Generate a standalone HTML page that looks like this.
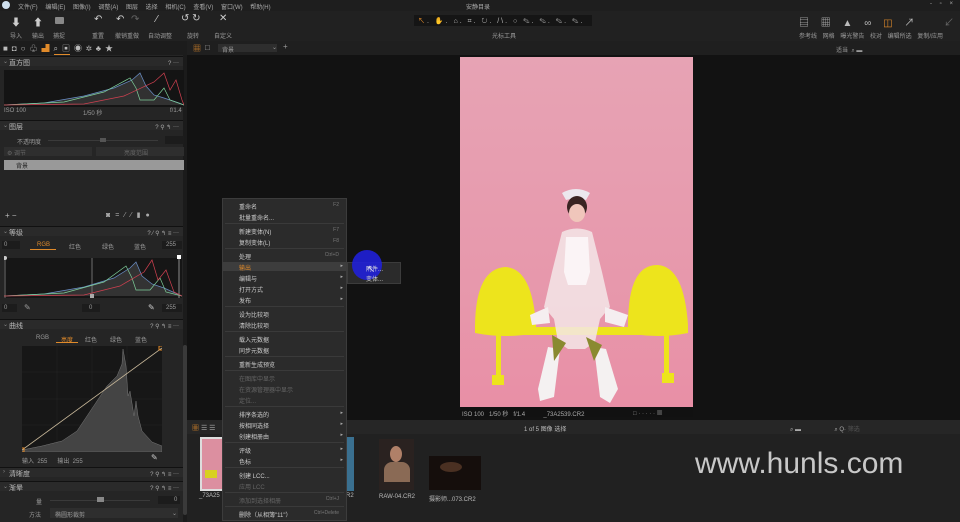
<!DOCTYPE html><html><head><meta charset="utf-8"><style>
*{margin:0;padding:0;box-sizing:border-box}
body{width:960px;height:522px;overflow:hidden;background:#1a1a1a;font-family:"Liberation Sans","Noto Sans CJK SC",sans-serif;color:#aaa;font-size:6px;position:relative}
.a{position:absolute}
.t{position:absolute;white-space:nowrap;font-size:6px;color:#9a9a9a}
.hd{position:absolute;left:0;width:183px;height:10px;background:#2a2a2a;border-top:1px solid #111}
.hd span{position:absolute;left:9px;top:1px;font-size:7px;color:#bbb}
.hd i{position:absolute;left:3px;top:1px;font-style:normal;font-size:6px;color:#888}
.hd b{position:absolute;right:4px;top:1px;font-weight:normal;font-size:6px;color:#aaa}
.mi{position:absolute;left:17px;font-size:6px;color:#ccc}
.mk{position:absolute;right:8px;font-size:5px;color:#777}
.ar{position:absolute;right:4px;font-size:5px;color:#aaa}
.sep{position:absolute;left:3px;right:3px;height:1px;background:#3a3a3a}
.dis{color:#666!important}
</style></head><body>
<div class="a" style="left:0;top:0;width:960px;height:11px;background:#1e1e1e"></div>
<div class="a" style="left:2px;top:1px;width:8px;height:8px;border-radius:50%;background:#cfe0ee"></div>
<div class="t" style="left:18px;top:2px;color:#aaa;word-spacing:6px">文件(F) 编辑(E) 图像(I) 调整(A) 图层 选择 相机(C) 查看(V) 窗口(W) 帮助(H)</div>
<div class="t" style="left:466px;top:2px;color:#aaa">安静目录</div>
<div class="t" style="left:930px;top:1px;color:#aaa;word-spacing:6px">- ▫ ×</div>
<div class="a" style="left:0;top:11px;width:960px;height:30px;background:#212121"></div>
<div class="t" style="left:11px;top:14px;font-size:10px;color:#ccc">⬇</div><div class="t" style="left:10px;top:31px">导入</div>
<div class="t" style="left:33px;top:14px;font-size:10px;color:#ccc">⬆</div><div class="t" style="left:32px;top:31px">输出</div>
<div class="a" style="left:55px;top:17px;width:9px;height:7px;background:#888;border-radius:1px"></div><div class="t" style="left:53px;top:31px">捕捉</div>
<div class="t" style="left:94px;top:14px;font-size:10px;color:#ccc">↶</div><div class="t" style="left:92px;top:31px">重置</div>
<div class="t" style="left:116px;top:14px;font-size:10px;color:#ccc">↶</div><div class="t" style="left:131px;top:14px;font-size:10px;color:#666">↷</div><div class="t" style="left:115px;top:31px">撤销重做</div>
<div class="t" style="left:156px;top:14px;font-size:10px;color:#ccc">⁄</div><div class="t" style="left:148px;top:31px">自动调整</div>
<div class="t" style="left:181px;top:13px;font-size:10px;color:#ccc">↺ ↻</div><div class="t" style="left:187px;top:31px">旋转</div>
<div class="t" style="left:219px;top:13px;font-size:10px;color:#ccc">✕</div><div class="t" style="left:214px;top:31px">自定义</div>
<div class="a" style="left:414px;top:15px;width:178px;height:11px;background:#151515"></div>
<div class="t" style="left:418px;top:16px;font-size:7px;color:#bbb;letter-spacing:2px"><span style="color:#e08a2a">↖</span>. ✋. ⌂. ⌗. ↻. /\. ○ ✎. ✎. ✎. ✎.</div>
<div class="t" style="left:492px;top:31px">光标工具</div>
<div class="t" style="left:799px;top:14px;font-size:10px;color:#bbb;word-spacing:9px">▤ ▦ ▲ ∞ <span style="color:#e08a2a">◫</span> ↗</div>
<div class="t" style="left:944px;top:14px;font-size:10px;color:#666">↙</div>
<div class="t" style="left:799px;top:31px;word-spacing:4px">参考线 网格 曝光警告 校对 编辑所选 复制/应用</div>
<div class="a" style="left:0;top:41px;width:187px;height:14px;background:#1c1c1c"></div>
<div class="t" style="left:3px;top:43px;font-size:8px;color:#bbb;letter-spacing:4px">■◘○♧<span style="color:#e08a2a">▟</span>⌕▣◉✲♣★</div>
<div class="a" style="left:54px;top:54px;width:16px;height:1px;background:#e08a2a"></div>
<div class="a" style="left:0;top:55px;width:187px;height:467px;background:#252525"></div>
<div class="a" style="left:183px;top:55px;width:4px;height:467px;background:#1b1b1b"></div>
<div class="a" style="left:183px;top:345px;width:4px;height:170px;background:#3a3a3a;border-radius:2px"></div>
<div class="hd" style="top:56px"><i>⌄</i><span>直方图</span><b>? ⋯</b></div>
<div class="a" style="left:4px;top:70px;width:180px;height:37px;background:#141414"></div>
<svg class="a" style="left:4px;top:70px" width="180" height="37"><polyline fill="rgba(120,120,120,.3)" stroke="#6a8fc8" stroke-width=".7" points="0,35 40,33 80,26 110,18 128,10 136,3 142,16 150,25 160,28 175,33 180,35"/><polyline fill="none" stroke="#7fd09a" stroke-width=".7" points="0,35 60,32 100,22 126,8 132,18 136,30 150,30 160,18 166,30 180,35"/><polyline fill="none" stroke="#d04050" stroke-width=".7" points="0,35 80,34 120,26 150,12 160,3 166,20 172,10 178,30 180,35"/></svg>
<div class="t" style="left:4px;top:108px">ISO 100</div><div class="t" style="left:83px;top:108px">1/50 秒</div><div class="t" style="left:170px;top:108px">f/1.4</div>
<div class="hd" style="top:120px"><i>⌄</i><span>图层</span><b>? ⚲ ↰ ⋯</b></div>
<div class="t" style="left:17px;top:137px">不透明度</div>
<div class="a" style="left:48px;top:140px;width:110px;height:1px;background:#3a3a3a"></div><div class="a" style="left:100px;top:138px;width:6px;height:4px;background:#555"></div>
<div class="a" style="left:165px;top:136px;width:19px;height:8px;background:#1c1c1c"></div>
<div class="a" style="left:4px;top:147px;width:88px;height:9px;background:#2e2e2e"></div><div class="t dis" style="left:7px;top:148px">⚙ 调节</div>
<div class="a" style="left:96px;top:147px;width:88px;height:9px;background:#2e2e2e"></div><div class="t dis" style="left:124px;top:148px">亮度范围</div>
<div class="a" style="left:4px;top:160px;width:180px;height:10px;background:#999"></div><div class="t" style="left:16px;top:161px;color:#222">背景</div>
<div class="t" style="left:5px;top:211px;font-size:8px;color:#bbb">+ −</div>
<div class="t" style="left:106px;top:211px;font-size:7px;color:#aaa;letter-spacing:5px">◙=⁄⁄▮●</div>
<div class="hd" style="top:226px"><i>⌄</i><span>等级</span><b>? ⁄ ⚲ ↰ ≡ ⋯</b></div>
<div class="a" style="left:2px;top:241px;width:18px;height:8px;background:#1c1c1c"></div><div class="t" style="left:4px;top:242px">0</div>
<div class="t" style="left:37px;top:242px;color:#e08a2a">RGB</div><div class="a" style="left:30px;top:249px;width:26px;height:1px;background:#e08a2a"></div>
<div class="t" style="left:69px;top:242px">红色</div><div class="t" style="left:102px;top:242px">绿色</div><div class="t" style="left:134px;top:242px">蓝色</div>
<div class="a" style="left:162px;top:241px;width:20px;height:8px;background:#1c1c1c"></div><div class="t" style="left:166px;top:242px">255</div>
<svg class="a" style="left:4px;top:254px" width="178" height="46"><rect x="0" y="4" width="178" height="40" fill="#161616"/><line x1="1" y1="4" x2="1" y2="44" stroke="#aaa" stroke-width=".6"/><line x1="88" y1="4" x2="88" y2="44" stroke="#aaa" stroke-width=".6"/><line x1="175" y1="4" x2="175" y2="44" stroke="#ddd" stroke-width=".6"/><polyline fill="rgba(120,120,120,.3)" stroke="#6a8fc8" stroke-width=".7" points="0,42 40,40 80,33 110,24 126,14 132,8 138,22 148,30 160,34 178,42"/><polyline fill="none" stroke="#7fd09a" stroke-width=".7" points="0,42 60,39 100,28 122,12 128,24 132,36 146,36 156,24 162,38 178,42"/><polyline fill="none" stroke="#d04050" stroke-width=".7" points="0,42 80,41 116,32 140,18 148,6 154,26 162,16 170,38 178,42"/><circle cx="1" cy="4" r="2" fill="#ccc"/><rect x="173" y="1" width="4" height="4" fill="#fff"/><rect x="86" y="40" width="4" height="4" fill="#aaa"/></svg>
<div class="a" style="left:2px;top:304px;width:15px;height:8px;background:#1c1c1c"></div><div class="t" style="left:4px;top:305px">0</div>
<div class="t" style="left:24px;top:303px;font-size:8px">✎</div>
<div class="a" style="left:82px;top:304px;width:18px;height:8px;background:#1c1c1c"></div><div class="t" style="left:89px;top:305px">0</div>
<div class="t" style="left:148px;top:303px;font-size:8px;color:#ccc">✎</div>
<div class="a" style="left:162px;top:304px;width:20px;height:8px;background:#1c1c1c"></div><div class="t" style="left:166px;top:305px">255</div>
<div class="hd" style="top:319px"><i>⌄</i><span>曲线</span><b>? ⚲ ↰ ≡ ⋯</b></div>
<div class="t" style="left:36px;top:335px">RGB</div><div class="t" style="left:61px;top:335px;color:#e08a2a">亮度</div><div class="a" style="left:56px;top:342px;width:22px;height:1px;background:#e08a2a"></div>
<div class="t" style="left:85px;top:335px">红色</div><div class="t" style="left:110px;top:335px">绿色</div><div class="t" style="left:135px;top:335px">蓝色</div>
<svg class="a" style="left:22px;top:346px" width="140" height="106"><rect width="140" height="106" fill="#171717"/><g stroke="#262626" stroke-width=".5"><line x1="35" y1="0" x2="35" y2="106"/><line x1="70" y1="0" x2="70" y2="106"/><line x1="105" y1="0" x2="105" y2="106"/><line x1="0" y1="26" x2="140" y2="26"/><line x1="0" y1="53" x2="140" y2="53"/><line x1="0" y1="79" x2="140" y2="79"/></g><polygon fill="#444" stroke="#777" stroke-width=".5" points="0,104 20,100 40,95 55,85 65,70 75,55 85,40 95,30 100,18 101,3 104,20 106,50 108,45 112,70 114,55 116,70 120,85 130,96 140,100 140,106 0,106"/><line x1="0" y1="104" x2="140" y2="2" stroke="#c8b89a" stroke-width=".8"/><rect x="-2" y="102" width="4" height="4" fill="none" stroke="#e08a2a"/><rect x="137" y="0" width="4" height="4" fill="none" stroke="#e08a2a"/></svg>
<div class="t" style="left:22px;top:456px">输入 &nbsp;255 &nbsp;&nbsp;&nbsp;&nbsp;&nbsp;输出 &nbsp;255</div>
<div class="t" style="left:151px;top:453px;font-size:8px;color:#ccc">✎</div>
<div class="hd" style="top:467px"><i>›</i><span>清晰度</span><b>? ⚲ ↰ ≡ ⋯</b></div>
<div class="hd" style="top:481px"><i>⌄</i><span>渐晕</span><b>? ⚲ ↰ ≡ ⋯</b></div>
<div class="t" style="left:36px;top:497px">量</div>
<div class="a" style="left:50px;top:500px;width:100px;height:1px;background:#3a3a3a"></div><div class="a" style="left:97px;top:497px;width:7px;height:5px;background:#888"></div>
<div class="a" style="left:158px;top:496px;width:22px;height:8px;background:#1c1c1c"></div><div class="t" style="left:174px;top:497px">0</div>
<div class="t" style="left:29px;top:510px">方法</div>
<div class="a" style="left:50px;top:508px;width:128px;height:10px;background:#2e2e2e"></div><div class="t" style="left:55px;top:510px">椭圆形裁剪</div><div class="t" style="left:172px;top:510px">⌄</div>
<div class="a" style="left:187px;top:41px;width:773px;height:14px;background:#1f1f1f"></div>
<div class="t" style="left:193px;top:43px;font-size:8px;color:#e08a2a">▦</div><div class="t" style="left:205px;top:43px;font-size:8px;color:#aaa">□</div>
<div class="a" style="left:218px;top:44px;width:59px;height:8px;background:#2e2e2e"></div><div class="t" style="left:222px;top:45px">背景</div><div class="t" style="left:272px;top:44px">⌄</div>
<div class="t" style="left:283px;top:42px;font-size:8px">+</div>
<div class="t" style="left:836px;top:45px">适当 &nbsp;⌕ ▬</div>
<div class="a" style="left:187px;top:55px;width:773px;height:365px;background:#121212"></div>
<svg class="a" style="left:460px;top:57px" width="233" height="350" viewBox="0 0 233 350">
<defs><linearGradient id="g" x1="0" y1="0" x2="0" y2="1"><stop offset="0" stop-color="#e7a3b4"/><stop offset=".7" stop-color="#e797ab"/><stop offset="1" stop-color="#e88fa6"/></linearGradient></defs>
<rect width="233" height="350" fill="url(#g)"/>
<g fill="#ede41c"><path d="M15 268 Q16 212 45 210 Q72 211 76 268 L76 276 Q46 282 15 276Z"/><path d="M168 268 Q168 207 198 208 Q224 210 228 268 L228 276 Q198 282 168 276Z"/><rect x="28" y="270" width="175" height="8"/><rect x="36" y="276" width="5" height="48"/><rect x="204" y="276" width="5" height="46"/><rect x="32" y="318" width="12" height="10"/><rect x="202" y="316" width="12" height="10"/></g>
<path d="M102 136 Q116 128 130 136 L126 143 Q116 140 106 143Z" fill="#ece8ee"/>
<ellipse cx="117" cy="150" rx="10" ry="11" fill="#3a2422"/><ellipse cx="117" cy="156" rx="8" ry="9" fill="#f0c6bb"/>
<path d="M102 175 Q117 168 132 175 L142 215 L150 250 L140 262 L135 285 L125 292 L108 292 L98 285 L94 262 L84 250 L92 215Z" fill="#f3e6e8" opacity=".85"/>
<path d="M106 180 L128 180 L130 215 L126 228 L108 228 L104 215Z" fill="#fff" opacity=".7"/>
<path d="M70 258 L88 250 L90 266 L72 268Z" fill="#f5eef0"/><path d="M145 250 L168 258 L164 270 L145 265Z" fill="#f5eef0"/>
<path d="M88 290 L100 292 L94 340 L80 344 L78 332Z" fill="#f4f1f1"/><path d="M134 290 L146 292 L158 332 L150 346 L140 340Z" fill="#f4f1f1"/>
<path d="M92 278 L106 286 L94 304Z M126 280 L142 288 L134 304Z" fill="#8a8a30"/>
</svg>
<div class="a" style="left:460px;top:407px;width:233px;height:10px;background:#111"></div>
<div class="t" style="left:462px;top:409px;color:#aaa">ISO 100 &nbsp; 1/50 秒 &nbsp; f/1.4 &nbsp;&nbsp;&nbsp;&nbsp;&nbsp;&nbsp;&nbsp;&nbsp;&nbsp; _73A2539.CR2</div>
<div class="t" style="left:633px;top:408px;color:#888">□ · · · · · ▦</div>
<div class="a" style="left:187px;top:420px;width:773px;height:14px;background:#262626"></div>
<div class="t" style="left:192px;top:423px;font-size:7px;color:#e08a2a">▦ <span style="color:#aaa">☰ ☰</span></div>
<div class="t" style="left:524px;top:424px;color:#bbb">1 of 5 图像 选择</div>
<div class="t" style="left:790px;top:424px;color:#aaa">⌕ ▬ &nbsp;&nbsp;&nbsp;&nbsp;&nbsp;&nbsp;&nbsp;&nbsp;&nbsp;&nbsp;&nbsp;&nbsp;&nbsp;&nbsp;&nbsp;&nbsp;&nbsp;&nbsp; ⌕ Q· <span style="color:#555">筛选</span></div>
<div class="a" style="left:187px;top:434px;width:773px;height:88px;background:#212121"></div>
<div class="a" style="left:200px;top:437px;width:25px;height:54px;background:#ddd"></div>
<div class="a" style="left:202px;top:439px;width:21px;height:50px;background:#dc8fa0"></div>
<div class="a" style="left:205px;top:470px;width:12px;height:8px;background:#d8d020"></div>
<div class="t" style="left:199px;top:493px;color:#bbb">_73A25</div>
<div class="a" style="left:345px;top:437px;width:9px;height:54px;background:#3a7090"></div>
<div class="t" style="left:346px;top:493px;color:#bbb">R2</div>
<div class="a" style="left:379px;top:439px;width:35px;height:51px;background:#2a2220"></div>
<div class="a" style="left:390px;top:446px;width:12px;height:16px;border-radius:50%;background:#b08068"></div>
<div class="a" style="left:384px;top:462px;width:26px;height:20px;background:#8a6a55;border-radius:8px 8px 0 0"></div>
<div class="t" style="left:379px;top:494px;color:#bbb">RAW-04.CR2</div>
<div class="a" style="left:429px;top:456px;width:52px;height:34px;background:#150e0c"></div>
<div class="a" style="left:440px;top:462px;width:22px;height:10px;border-radius:50%;background:#4a3022"></div>
<div class="t" style="left:429px;top:494px;color:#bbb">摄影师...073.CR2</div>
<div class="t" style="left:695px;top:447px;font-size:30px;color:#c8c8c8;font-family:'Liberation Sans',sans-serif">www.hunls.com</div>
<div class="a" style="left:222px;top:198px;width:125px;height:323px;background:#2b2b2b;border:1px solid #3c3c3c"></div>
<div class="a" style="left:223px;top:262px;width:123px;height:9px;background:#3d3d3d"></div>
<div class="a" style="left:222px;top:198px;width:125px;height:323px">
<div class="mi" style="top:4px">重命名</div><div class="mk" style="top:4px">F2</div>
<div class="mi" style="top:15px">批量重命名...</div><div class="sep" style="top:25px"></div>
<div class="mi" style="top:29px">新建变体(N)</div><div class="mk" style="top:29px">F7</div>
<div class="mi" style="top:40px">复制变体(L)</div><div class="mk" style="top:40px">F8</div><div class="sep" style="top:50px"></div>
<div class="mi" style="top:54px">处理</div><div class="mk" style="top:54px">Ctrl+D</div>
<div class="mi" style="top:65px;color:#e08a2a">输出</div><div class="ar" style="top:65px">▸</div>
<div class="mi" style="top:76px">编辑与</div><div class="ar" style="top:76px">▸</div>
<div class="mi" style="top:87px">打开方式</div><div class="ar" style="top:87px">▸</div>
<div class="mi" style="top:98px">发布</div><div class="ar" style="top:98px">▸</div><div class="sep" style="top:108px"></div>
<div class="mi" style="top:112px">设为比较项</div>
<div class="mi" style="top:123px">清除比较项</div><div class="sep" style="top:133px"></div>
<div class="mi" style="top:137px">载入元数据</div>
<div class="mi" style="top:148px">同步元数据</div><div class="sep" style="top:158px"></div>
<div class="mi" style="top:162px">重新生成预览</div><div class="sep" style="top:172px"></div>
<div class="mi dis" style="top:176px">在图库中显示</div>
<div class="mi dis" style="top:187px">在资源管理器中显示</div>
<div class="mi dis" style="top:198px">定位...</div><div class="sep" style="top:208px"></div>
<div class="mi" style="top:212px">排序条选的</div><div class="ar" style="top:212px">▸</div>
<div class="mi" style="top:223px">按相同选择</div><div class="ar" style="top:223px">▸</div>
<div class="mi" style="top:234px">创建相册由</div><div class="ar" style="top:234px">▸</div><div class="sep" style="top:244px"></div>
<div class="mi" style="top:248px">评级</div><div class="ar" style="top:248px">▸</div>
<div class="mi" style="top:259px">色标</div><div class="ar" style="top:259px">▸</div><div class="sep" style="top:269px"></div>
<div class="mi" style="top:273px">创建 LCC...</div>
<div class="mi dis" style="top:284px">应用 LCC</div><div class="sep" style="top:294px"></div>
<div class="mi dis" style="top:298px">添加到选择相册</div><div class="mk" style="top:298px">Ctrl+J</div><div class="sep" style="top:308px"></div>
<div class="mi" style="top:312px">删除（从相簿"11"）</div><div class="mk" style="top:312px">Ctrl+Delete</div>
</div>
<div class="a" style="left:347px;top:262px;width:54px;height:22px;background:#2b2b2b;border:1px solid #3c3c3c"></div>
<div class="a" style="left:352px;top:250px;width:30px;height:30px;border-radius:50%;background:#2020d8;opacity:.9"></div>
<div class="t" style="left:366px;top:264px;color:#ddd">附件...</div>
<div class="t" style="left:366px;top:274px;color:#ccc">变体...</div>
<div class="t" style="left:367px;top:264px;font-size:8px;color:#fff">↖</div>
</body></html>
